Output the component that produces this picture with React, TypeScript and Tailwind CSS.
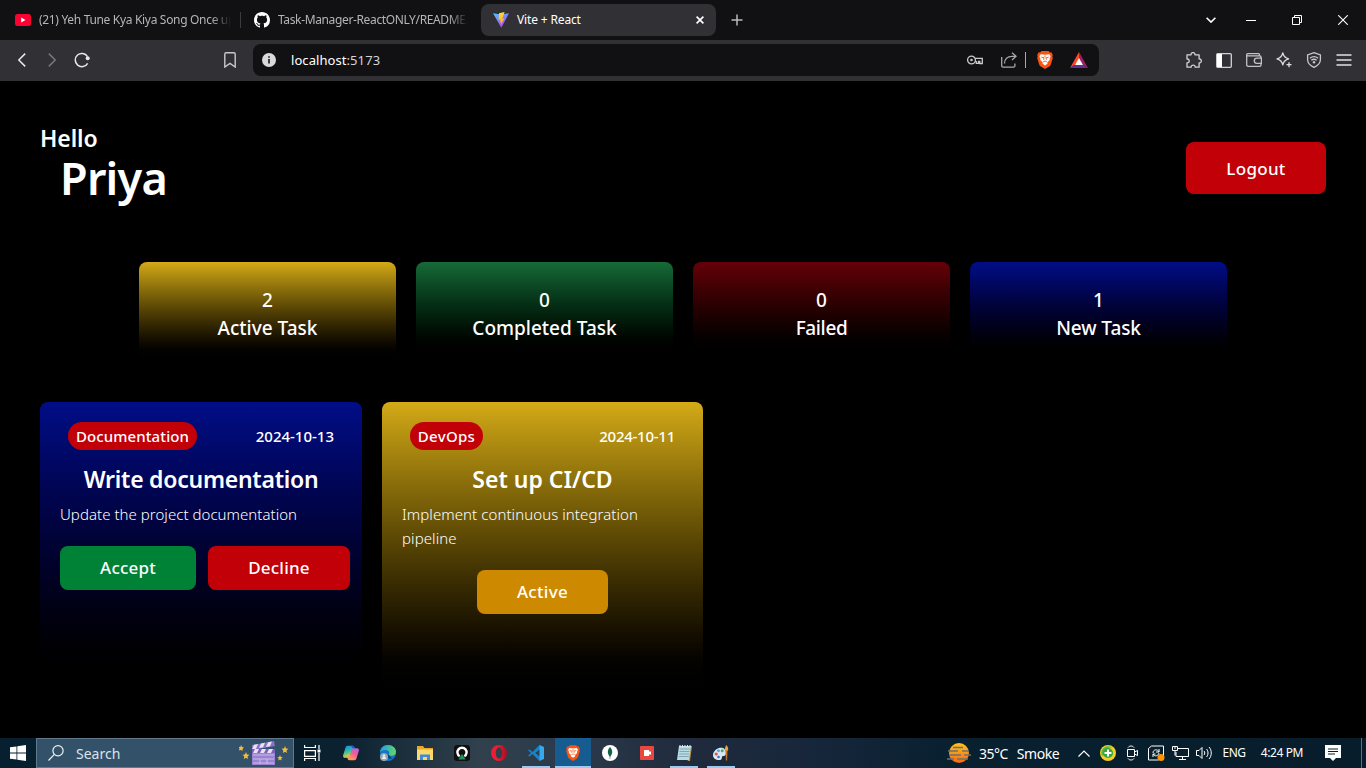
import React from "react";

type IconProps = { className?: string };

const Brave = ({ className = "" }: IconProps) => (
  <svg className={className} viewBox="0 0 16 18">
    <path d="M4.4 0h7.2l1.2 1.5 1.5-.2L15.8 4l-.5 1.3.5 1.6-2 6.5c-.3 1-.8 1.6-1.6 2.1L8 18l-4.2-2.5c-.8-.5-1.3-1.100-1.600-2.100l-2-6.500.5-1.600L.2 4l1.500-2.700 1.500.2z" fill="#fb5412" />
    <path d="M3.700 3.200 8 3.800l4.300-.6 1.300 2-1 2.600.2 1.300-2.500 2.200.3 1.300L8 14.400l-2.600-1.800.3-1.300-2.500-2.200.2-1.300-1-2.600z" fill="#fff" />
    <path d="M4.300 6.200 7 6.800l-.4 2M11.700 6.200 9 6.800l.4 2M6.200 10.800 8 10l1.800.8M8 4.500v2" stroke="#fb5412" strokeWidth=".9" fill="none" />
  </svg>
);

const tab = "font-['Noto_Sans',sans-serif] text-[12px] leading-5 whitespace-nowrap";

function TabStrip() {
  return (
    <div className="flex h-10 shrink-0 items-center bg-[#111113] text-[#b5b5b9]">
      <div className="flex h-8 w-[240px] items-center pl-[15px]">
        <svg className="h-3 w-4 shrink-0" viewBox="0 0 16 12">
          <rect width="16" height="12" rx="2.500" fill="#ff0033" />
          <path d="M6.200 3.500v5l4.300-2.500z" fill="#fff" />
        </svg>
        <span className={`${tab} ml-2 w-[192px] overflow-hidden tracking-[-0.32px] [mask-image:linear-gradient(to_right,black_90%,transparent)]`}>(21) Yeh Tune Kya Kiya Song Once up</span>
      </div>
      <div className="h-4 w-px bg-[#3b3b3f]" />
      <div className="flex h-8 w-[240px] items-center pl-[13px]">
        <svg className="h-4 w-4 shrink-0" viewBox="0 0 16 16" fill="#fff">
          <path d="M8 0C3.580 0 0 3.580 0 8c0 3.540 2.290 6.530 5.470 7.590.4.070.55-.17.55-.38 0-.19-.01-.82-.01-1.490-2.010.37-2.530-.49-2.690-.94-.09-.23-.48-.94-.82-1.130-.28-.15-.68-.52-.01-.53.63-.01 1.080.58 1.230.82.72 1.210 1.870.87 2.330.66.070-.52.280-.87.510-1.070-1.780-.2-3.640-.89-3.640-3.950 0-.87.310-1.590.820-2.150-.080-.2-.360-1.020.080-2.120 0 0 .670-.210 2.200.820.640-.180 1.320-.270 2-.270s1.360.090 2 .270c1.530-1.040 2.200-.820 2.200-.820.440 1.100.160 1.920.080 2.120.510.560.820 1.270.820 2.150 0 3.070-1.870 3.750-3.650 3.950.290.250.540.730.540 1.480 0 1.070-.010 1.930-.010 2.200 0 .210.150.460.550.380A8.010 8.010 0 0 0 16 8c0-4.420-3.580-8-8-8" />
        </svg>
        <span className={`${tab} ml-2 w-[190px] overflow-hidden tracking-[-0.36px] [mask-image:linear-gradient(to_right,black_90%,transparent)]`}>Task-Manager-ReactONLY/README.</span>
      </div>
      <div className="flex h-8 w-[235px] items-center rounded-[8px] bg-[#313135] pr-3 pl-3">
        <svg className="h-4 w-4 shrink-0" viewBox="0 0 16 16">
          <defs>
            <linearGradient id="va" x1="0" y1="0" x2=".7" y2="1">
              <stop offset="0" stopColor="#41d1ff" />
              <stop offset="1" stopColor="#bd34fe" />
            </linearGradient>
            <linearGradient id="vb" x1="0" y1="0" x2="0" y2="1">
              <stop offset="0" stopColor="#ffdd35" />
              <stop offset="1" stopColor="#ffa800" />
            </linearGradient>
          </defs>
          <path d="M0 1.200 8 2.600l8-1.400L8.300 15.700z" fill="url(#va)" />
          <path d="M11.600 0 6 1.200 5.600 8l2-.4-.5 3 1.300-.4-.8 3.200 3.700-7-2.100.3z" fill="url(#vb)" />
        </svg>
        <span className={`${tab} ml-2 flex-1 tracking-[-0.15px] text-white`}>Vite + React</span>
        <svg className="h-2 w-2" viewBox="0 0 8 8" stroke="#fff" strokeWidth="1.700"><path d="m.6.6 6.800 6.800M7.400.6.6 7.400" /></svg>
      </div>
      <svg className="ml-[15px] h-3 w-3" viewBox="0 0 12 12" stroke="#b9b9bc" strokeWidth="1.500"><path d="M6 .5v11M.5 6h11" /></svg>
      <div className="ml-auto flex items-center pr-[18px]">
        <svg className="h-[6px] w-[10px]" viewBox="0 0 10 6" fill="none" stroke="#fff" strokeWidth="1.600"><path d="m.6.7 4.400 4.400L9.400.7" /></svg>
        <div className="ml-[30px] h-px w-[10px] bg-white" />
        <svg className="ml-9 h-[10px] w-[10px]" viewBox="0 0 10 10" fill="none" stroke="#fff"><path d="M.5 2.500h7v7h-7zM2.500 2.500v-2h7v7h-2" /></svg>
        <svg className="ml-9 h-[10px] w-[10px]" viewBox="0 0 10 10" fill="none" stroke="#fff" strokeWidth="1.100"><path d="m.2.2 9.600 9.600M9.800.2.2 9.800" /></svg>
      </div>
    </div>
  );
}

function Toolbar() {
  return (
    <div className="flex h-[41px] shrink-0 items-center bg-[#313135] pb-px">
      <svg className="ml-[18px] h-[14px] w-[8px]" viewBox="0 0 8 14" fill="none" stroke="#e8e8ea" strokeWidth="1.500"><path d="M7.200.6.8 7l6.400 6.400" /></svg>
      <svg className="ml-[22px] h-[14px] w-[8px]" viewBox="0 0 8 14" fill="none" stroke="#77777c" strokeWidth="1.500"><path d="M.8.6 7.200 7 .8 13.400" /></svg>
      <svg className="ml-[18px] h-4 w-4" viewBox="0 0 16 16" fill="none" stroke="#e8e8ea" strokeWidth="1.500"><path d="M13.600 11.300A6.600 6.600 0 1 1 13.500 4.600" /><circle cx="13.700" cy="6.200" r="2" fill="#e8e8ea" stroke="none" /></svg>
      <svg className="ml-[134px] h-4 w-3" viewBox="0 0 12 16" fill="none" stroke="#c9c9cc" strokeWidth="1.400"><path d="M.8 2.200C.8 1.300 1.300.8 2.200.8h7.600c.9 0 1.400.5 1.400 1.400V15L6 11.400.8 15z" /></svg>
      <div className="ml-[17px] flex h-8 w-[846px] items-center rounded-[8px] bg-[#111113]">
        <svg className="ml-[9px] h-[14px] w-[14px]" viewBox="0 0 14 14"><circle cx="7" cy="7" r="7" fill="#d9d9dc" /><path d="M6.200 6h1.600v4.500H6.200zM6.200 3.200h1.600v1.600H6.200z" fill="#111113" /></svg>
        <span className="ml-[15px] flex-1 font-['Noto_Sans',sans-serif] text-[13px] leading-5 tracking-[0.07px] text-[#d4d4d7]"><span className="text-white">localhost</span>:5173</span>
        <svg className="h-4 w-4" viewBox="0 0 16 16" fill="none" stroke="#c9c9cc" strokeWidth="1.300"><circle cx="4.500" cy="8" r="3.900" /><circle cx="4.500" cy="8" r="1.300" fill="#c9c9cc" stroke="none" /><path d="M8.100 6.300h7.200v5.200h-2.500V9.400h-1.300v2H9.300V9.600H8.200" /></svg>
        <svg className="ml-[18px] h-4 w-4" viewBox="0 0 16 16" fill="none" stroke="#a9a9ac" strokeWidth="1.300"><path d="M.7 5v8.800c0 .9.500 1.400 1.400 1.400h10.400c.9 0 1.400-.5 1.400-1.400v-2.300M3.500 11.500C3.500 6.800 6.500 4.300 11 4.300h4M11 .7l4.100 3.600L11 8" /></svg>
        <div className="ml-2 h-4 w-px bg-[#a9a9ac]" />
        <Brave className="ml-[11px] h-[18px] w-4" />
        <svg className="mr-[11px] ml-[17px] h-4 w-[18px]" viewBox="0 0 18 16"><path d="M9 0 0 16l9-6z" fill="#ff4724" /><path d="m9 0 9 16-9-6z" fill="#9e1f63" /><path d="M0 16h18l-4-3H4z" fill="#662d91" /><path d="m9 6 4 7H5z" fill="#fff" /></svg>
      </div>
      <div className="ml-auto flex items-center gap-[14px] pr-[14px]">
        <svg className="h-4 w-4" viewBox="0 0 16 16" fill="none" stroke="#d3d3d6" strokeWidth="1.300" strokeLinejoin="round"><path d="M1 2.800h4.100c-.3-1.500.8-2.200 1.900-2.200s2.200.7 1.900 2.200h4.200V7c1.500-.3 2.200.8 2.200 1.900s-.7 2.200-2.200 1.900v4.400H9.200c.1-1.400-.9-2.100-2-2.100s-2.200.7-2 2.100H1v-4.400c1.600.1 2.200-.9 2.200-1.900S2.500 6.900 1 7z" /></svg>
        <svg className="h-[15px] w-4" viewBox="0 0 16 15"><rect x=".7" y=".7" width="14.600" height="13.600" rx="1" fill="none" stroke="#d3d3d6" strokeWidth="1.300" /><path d="M1 1h5v13H1z" fill="#fff" /></svg>
        <svg className="h-[14px] w-4" viewBox="0 0 16 14" fill="none" stroke="#c3c3c6" strokeWidth="1.300"><path d="M15 5.200V4c0-.7-.4-1.100-1.100-1.100H1.800C1.100 2.900.7 2.400.7 1.800S1.200.7 1.900.7h10.500c.7 0 1.100.4 1.100 1.100v1.100M.7 2v9.900c0 .8.500 1.400 1.400 1.400h11.500c.9 0 1.400-.5 1.400-1.400v-1.400M15.400 5.200h-4.500a2.600 2.600 0 0 0 0 5.200h4.500z" /></svg>
        <svg className="h-4 w-4" viewBox="0 0 16 16" fill="none" stroke="#e0e0e3" strokeWidth="1.300" strokeLinejoin="round"><path d="M6.800.8c.8 3.700 2.100 5.100 5.800 6-3.700.9-5 2.200-5.800 6C6 9 4.700 7.700 1 6.800c3.700-.9 5-2.300 5.800-6zM13 10.200v5M10.500 12.700h5" /></svg>
        <svg className="h-4 w-4" viewBox="0 0 16 16" fill="none" stroke="#c9c9cc" strokeWidth="1.300"><path d="M8 .7 14.400 3v4.500c0 3.600-2.500 6.200-6.400 7.800-3.900-1.600-6.400-4.200-6.400-7.800V3zM3.900 6.300c2.500-2 5.700-2 8.200 0M5.300 8.300c1.700-1.300 3.700-1.300 5.400 0" /><circle cx="8" cy="10.200" r="1.200" fill="#c9c9cc" stroke="none" /></svg>
        <svg className="h-3 w-4" viewBox="0 0 16 12" stroke="#e0e0e3" strokeWidth="1.400"><path d="M.5 1h15M.5 6h15M.5 11h15" /></svg>
      </div>
    </div>
  );
}

const sans = "font-['Noto_Sans',sans-serif]";

function Stat({ n, label, tone, track }: { n: string; label: string; tone: string; track: string }) {
  return (
    <div className={`flex h-[100px] w-[257px] flex-col items-center rounded-[8px] bg-linear-to-b to-black pt-6 text-[19px] leading-7 font-medium ${tone}`}>
      <div>{n}</div>
      <div className={track}>{label}</div>
    </div>
  );
}

function TaskCard(props: { tone: string; tag: string; tagClass: string; date: string; dateClass: string; title: string; titleClass: string; body: string; bodyClass: string; children: React.ReactNode }) {
  return (
    <div className={`h-[300px] rounded-[8px] bg-linear-to-b to-black px-5 pt-5 ${props.tone}`}>
      <div className="flex h-7 items-center justify-between pr-2 pl-2">
        <span className={`flex h-7 items-center justify-center rounded-full bg-[#c10007] text-[15px] font-medium whitespace-nowrap ${props.tagClass}`}>{props.tag}</span>
        <span className={`text-[15px] leading-6 font-medium whitespace-nowrap ${props.dateClass}`}>{props.date}</span>
      </div>
      <h2 className={`mt-[13px] text-center text-[23px] leading-8 font-semibold whitespace-nowrap ${props.titleClass}`}>{props.title}</h2>
      <p className={`mt-[7px] text-[15px] leading-6 font-light ${props.bodyClass}`}>{props.body}</p>
      {props.children}
    </div>
  );
}

const button = "flex items-center justify-center rounded-[8px] text-[17px] font-medium whitespace-nowrap";

function Dashboard() {
  return (
    <main className={`${sans} flex h-[657px] shrink-0 flex-col bg-black px-10 text-white`}>
      <header className="flex items-start justify-between pt-[41px]">
        <div>
          <div className="text-[23px] leading-8 font-semibold tracking-[-0.1px]">Hello</div>
          <div className="pl-5 text-[45px] leading-[48px] font-semibold tracking-[-0.8px]">Priya</div>
        </div>
        <button className={`${button} mt-5 h-[52px] w-[140px] bg-[#c10007] pt-[2px] tracking-[0.3px]`}>Logout</button>
      </header>
      <section className="mt-[60px] flex justify-center gap-5">
        <Stat n="2" label="Active Task" tone="from-[#d4aa17]" track="" />
        <Stat n="0" label="Completed Task" tone="from-[#166b38]" track="" />
        <Stat n="0" label="Failed" tone="from-[#650009]" track="tracking-[-0.35px]" />
        <Stat n="1" label="New Task" tone="from-[#000e87]" track="tracking-[-0.1px]" />
      </section>
      <section className="mt-10 flex gap-5">
        <TaskCard tone="w-[322px] from-[#000e87]" tag="Documentation" tagClass="w-[129px] tracking-[0.1px]" date="2024-10-13" dateClass="" title="Write documentation" titleClass="tracking-[-0.25px]" body="Update the project documentation" bodyClass="tracking-[0.04px]">
          <div className="mt-5 flex gap-3">
            <button className={`${button} h-11 w-[136px] shrink-0 bg-[#008236] tracking-[0.2px]`}>Accept</button>
            <button className={`${button} h-11 w-[142px] shrink-0 bg-[#c10007] tracking-[0.2px]`}>Decline</button>
          </div>
        </TaskCard>
        <TaskCard tone="w-[321px] from-[#d4aa17]" tag="DevOps" tagClass="w-[73px] tracking-[0.3px]" date="2024-10-11" dateClass="tracking-[-0.25px]" title="Set up CI/CD" titleClass="" body="Implement continuous integration pipeline" bodyClass="tracking-[0.08px]">
          <button className={`${button} mx-auto mt-5 h-11 w-[131px] bg-[#cd8900] tracking-[0.3px]`}>Active</button>
        </TaskCard>
      </section>
    </main>
  );
}

const slot = "flex h-full w-[37px] shrink-0 items-center justify-center";
const open = "border-b-2 border-[#9cc9f0] pt-[2px]";

function Taskbar() {
  return (
    <footer className={`${sans} flex h-[30px] shrink-0 items-stretch bg-[linear-gradient(90deg,#06202f_0%,#0b2130_25%,#30404c_35%,#2b3a4b_42%,#202b3d_50%,#16263a_60%,#08202f_70%,#071d2b_100%)] text-white`}>
      <div className="flex w-9 items-center justify-center">
        <svg className="h-4 w-4" viewBox="0 0 16 16" fill="#fff"><path d="M0 2.300 6.500 1.400v6.200H0zM7.300 1.300 16 0v7.600H7.300zM0 8.400h6.500v6.200L0 13.700zM7.300 8.400H16V16l-8.700-1.300z" /></svg>
      </div>
      <div className="flex w-[258px] items-center border border-[#5e7a8c] bg-[#33526a] pl-[11px]">
        <svg className="h-4 w-4" viewBox="0 0 16 16" fill="none" stroke="#eef3f6" strokeWidth="1.200"><circle cx="10" cy="5.800" r="5.100" /><path d="M6.400 9.400.5 15.500" /></svg>
        <span className="ml-3 flex-1 pt-px text-[14px] leading-5 tracking-[0px] text-[#dbe3e8]">Search</span>
        <svg className="mr-1 h-6 w-[50px]" viewBox="0 0 50 24">
          <path d="m13 4 22-4 1 5-23 4z" fill="#8a70c8" />
          <path d="m15 3.800 4-.7-2 4.600-4 .7zM22 2.500l4-.7-2 4.600-4 .7zM29 1.300l4-.7-2 4.600-4 .7z" fill="#eae1f5" />
          <path d="M13 8h23v16H13z" fill="#9a83d2" />
          <path d="M13 8h23v4H13z" fill="#7a60bd" />
          <path d="m16 8h4l-2 4h-4zM23 8h4l-2 4h-4zM30 8h4l-2 4h-4z" fill="#eae1f5" />
          <path d="M14 14h21M14 18h21M14 22h21M21 18v5M28 18v5" stroke="#cbbceb" strokeWidth="1" />
          <path d="m2 4 1 2 2 .5L3.500 8v2L2 9 0 9.600.5 7.500-.5 6l2-.2zM7 11l1 2.500 2.500.3-2 1.700.6 2.500L7 16.700 4.800 18l.5-2.500-1.800-1.700 2.500-.3zM46 5l1 2.500 2.500.3-2 1.700.6 2.500-2.100-1.300-2.200 1.300.5-2.500-1.800-1.700 2.500-.3zM41 14l.8 2 2 .2-1.600 1.400.5 2-1.700-1-1.800 1 .5-2-1.500-1.400 2-.2z" fill="#f6bd3d" />
        </svg>
      </div>
      <div className={slot}>
        <svg className="h-4 w-[17px]" viewBox="0 0 17 16" fill="none" stroke="#fff" strokeWidth="1.200"><path d="M.6 0v2.500h10.800V0M.6 5.600h10.800v5.800H.6zM.6 16v-2.500h10.800V16M15 0v4M15 8v8" /><path d="M13.500 4.500h3v3h-3z" fill="#fff" stroke="none" /></svg>
      </div>
      <div className="-ml-px mr-px flex items-stretch">
        <div className={slot}>
          <svg className="ml-[5px] h-4 w-4" viewBox="0 0 16 16"><defs><linearGradient id="ca" x1="0" y1="0" x2=".3" y2="1"><stop stopColor="#1687e8" /><stop offset=".5" stopColor="#31b8ad" /><stop offset="1" stopColor="#e9d034" /></linearGradient><linearGradient id="cb" x1="1" y1="0" x2=".4" y2="1"><stop stopColor="#a866ef" /><stop offset=".5" stopColor="#f05a9c" /><stop offset="1" stopColor="#ff9d52" /></linearGradient></defs><path d="M4.500.8h5c1.300 0 1.700.8 2 2l.4 1.400H9.500L7.200 11c-.4 1.200-1 1.700-2 1.700H2C.3 12.700-.2 11.400.2 10l2.200-7C2.900 1.500 3.300.8 4.500.8z" fill="url(#ca)" /><path d="M11.500 15.200h-5c-1.300 0-1.700-.8-2-2l-.4-1.400h2.400L8.800 5c.4-1.200 1-1.700 2-1.700H14c1.700 0 2.200 1.300 1.800 2.700l-2.200 7c-.5 1.500-.9 2.200-2.100 2.200z" fill="url(#cb)" /><path d="M8.200.8h1.300c1.300 0 1.700.8 2 2l.3.600H10.500C9 3.300 8.700 1.800 8.200.8z" fill="#2352d8" /></svg>
        </div>
        <div className={slot}>
          <svg className="ml-[5px] h-4 w-4" viewBox="0 0 16 16"><defs><linearGradient id="ea" x1="0" y1=".3" x2="1" y2=".5"><stop stopColor="#249ce6" /><stop offset="1" stopColor="#62d765" /></linearGradient></defs><circle cx="8" cy="8" r="8" fill="#1377c5" /><path d="M0 7C.6 2.800 3.700 0 8 0c4.600 0 8 3.200 8 6.800 0 2.700-2 4-4.500 4-1.800 0-3-.7-2.700-1.300C10.500 6.900 8 5 5.500 5 3 5 1 6 0 7z" fill="url(#ea)" /><path d="M5.500 8c-.8 3 1.800 6 6 5.800 1.600 0 2.800-.7 3.700-1.500l-2 2.700L10 11z" fill="#16416f" /><circle cx="4" cy="12" r="4" fill="#9aa8b2" /><circle cx="4" cy="10.800" r="1.300" fill="#e8edf0" /><path d="M1.800 14a2.200 2.200 0 0 1 4.400 0z" fill="#e8edf0" /></svg>
        </div>
        <div className={slot}>
          <svg className="ml-[5px] h-[14px] w-4" viewBox="0 0 16 14"><path d="M0 0h6l1.500 2H16v3H0z" fill="#e6a928" /><path d="M0 3.500h16V14H0z" fill="#ffd86b" /><path d="M3 14V8.500h10V14h-3v-3H6v3z" fill="#3b8cd9" /></svg>
        </div>
        <div className={slot}>
          <svg className="ml-[5px] h-4 w-4" viewBox="0 0 16 16"><rect width="16" height="16" rx="3" fill="#101010" /><path d="M5.700 11.300A4.600 4.600 0 1 1 10.300 11.300" fill="none" stroke="#fff" strokeWidth="2.400" /><path d="m8 9 3.700 5.500H4.300z" fill="#1e9358" /></svg>
        </div>
        <div className={slot}>
          <svg className="ml-[5px] h-4 w-4" viewBox="0 0 16 16"><defs><linearGradient id="op" x1="0" y1="0" x2="1" y2="0"><stop offset=".4" stopColor="#f01c33" /><stop offset="1" stopColor="#a50f24" /></linearGradient></defs><path fillRule="evenodd" d="M8 0a8 8 0 1 0 0 16A8 8 0 0 0 8 0zm0 2.500c2 0 3.200 2.500 3.200 5.500S10 13.500 8 13.500 4.800 11 4.800 8 6 2.500 8 2.500z" fill="url(#op)" /></svg>
        </div>
        <div className={slot}>
          <div className={`${open} ml-[5px] flex h-full w-7 items-center justify-center`}>
            <svg className="h-4 w-4" viewBox="0 0 16 16"><path d="M11.500 0 4.500 7 1.500 4.500 0 5.300 3 8l-3 2.700 1.500.9 3-2.600 7 7 .5-1V1z" fill="#1683cc" /><path d="m11.500 0 4.500 2v12l-4.500 2zM11.500 4.500 7 8l4.500 3.500z" fill="#36a8ed" /><path d="M11.500 4.500 7 8l4.500 3.500z" fill="#30404c" /></svg>
          </div>
        </div>
      </div>
      <div className={`${open} ml-[2px] flex w-9 items-center justify-center bg-[#175c91]`}><Brave className="h-4 w-[14px]" /></div>
      <div className={slot}>
        <svg className="h-4 w-4" viewBox="0 0 16 16"><circle cx="8" cy="8" r="8" fill="#fff" /><path d="M8 2c3 3.500 2.800 6.700 0 10-2.800-3.300-3-6.500 0-10z" fill="#116149" /><path d="M8 11v3" stroke="#88a095" /></svg>
      </div>
      <div className={slot}>
        <svg className="h-[14px] w-[14px]" viewBox="0 0 14 14"><rect width="14" height="14" rx="1" fill="#e8483f" /><path d="M4 4h5v1.500h2v3H9V10H4z" fill="#fff" /></svg>
      </div>
      <div className={slot}>
        <div className={`${open} flex h-full w-7 items-center justify-center`}>
          <svg className="h-4 w-4" viewBox="0 0 16 16"><path d="M4 1h12l-2 15H12z" fill="#b68e45" /><path d="M3 1h12l-2 14H1z" fill="#b9dce4" /><path d="M4 4h10M3.600 6.500h10M3.200 9h10M2.800 11.500h10" stroke="#719ba7" strokeWidth=".8" /><path d="M4 0v2M6.500 0v2M9 0v2M11.500 0v2M14 0v2" stroke="#eef" /></svg>
        </div>
      </div>
      <div className={slot}>
        <div className={`${open} flex h-full w-7 items-center justify-center`}>
          <svg className="h-4 w-4" viewBox="0 0 16 16"><path d="M6 3c4-1 7 1 7 5 0 3-2 3-3 3-2 0 0 3.500-3 4-4 .3-7-1.500-7-5 0-3 3-6 6-7z" fill="#d7e9f3" /><circle cx="3.200" cy="9" r="1.600" fill="#e94f45" /><circle cx="5.500" cy="5.800" r="1.400" fill="#46a2e8" /><circle cx="9.200" cy="5.800" r="1.500" fill="#44b069" /><circle cx="5.500" cy="12" r="1.300" fill="#426bc3" /><path d="M12.500 5h2l-.4 10.500h-1.200z" fill="#c87424" /><path d="M11.800 5.500c-.6-2 .8-3 1.200-5.500 1.700 1 2.800 3.500 2 5.500z" fill="#efa147" /></svg>
        </div>
      </div>
      <div className="ml-auto flex items-center whitespace-nowrap">
        <svg className="h-5 w-6" viewBox="0 0 24 20"><defs><linearGradient id="sun" x1="0" y1="0" x2="0" y2="1"><stop stopColor="#ffc21c" /><stop offset="1" stopColor="#f36b16" /></linearGradient></defs><circle cx="12" cy="10" r="10" fill="url(#sun)" /><path d="M6 4.500h10M1 8h10M15 8h7M3 12h11M17 12h7M0 16h7M10 16h11" stroke="#6d6f70" strokeWidth="1.300" /></svg>
        <span className="ml-2 pt-px text-[14px] leading-5 tracking-[-0.5px]">35°C</span>
        <span className="ml-[9px] pt-px text-[14px] leading-5 tracking-[-0.4px]">Smoke</span>
        <svg className="ml-[19px] h-[7px] w-3" viewBox="0 0 12 7" fill="none" stroke="#fff" strokeWidth="1.200"><path d="M.5 6.500 6 1l5.500 5.500" /></svg>
        <svg className="ml-[10px] h-4 w-4" viewBox="0 0 16 16"><circle cx="8" cy="8" r="8" fill="#f5cf24" /><path d="M2 11C-1 5 6-2 13 3 9 1 4 4 5 10z" fill="#59b947" /><circle cx="8" cy="8" r="5" fill="#35a642" /><path d="M7 4.500h2V7h2.500v2H9v2.500H7V9H4.500V7H7z" fill="#fff" /></svg>
        <svg className="ml-[11px] h-4 w-[11px]" viewBox="0 0 11 16" fill="none" stroke="#fff"><path d="M.5 4.500h7v7h-7zM7.500 7l3-1.500v5l-3-1.500M1 2.500c1.500-2 4.500-2 6 0M1 13.500c1.500 2 4.500 2 6 0" /></svg>
        <svg className="ml-[10px] h-4 w-[17px]" viewBox="0 0 17 16" fill="none" stroke="#fff"><path d="M.5 3.500V15h10M.5 3.500l3-2.500h12v11M5 8c0-4 5-4 6-1M11 4v3H8M11 8c-.5 3-4.500 4-6 1M5 12V9h2.500" /><circle cx="13" cy="12.500" r="3.500" fill="#ff9500" stroke="none" /></svg>
        <svg className="ml-[7px] h-[14px] w-[17px]" viewBox="0 0 17 14" fill="none" stroke="#fff"><path d="M6 2.500h10.500v8H4V6M7 13.500h7M10.500 10.500v3M.5.500h5v4h-5zM3 4.500v5" /><path d="M2 2h2" /></svg>
        <svg className="ml-[7px] h-[14px] w-[17px]" viewBox="0 0 17 14" fill="none" stroke="#fff"><path d="M.5 4.500h2.500l3-3v11l-3-3H.5zM8 5c1 1 1 3 0 4M10.500 3c2 2 2 6 0 8M13 1c3 3 3 9 0 12" /></svg>
        <span className="ml-[9px] text-[12px] leading-5 tracking-[-0.4px]">ENG</span>
        <span className="ml-[15px] text-[12px] leading-5 tracking-[-0.4px]">4:24 PM</span>
        <svg className="ml-[22px] h-4 w-4" viewBox="0 0 16 16"><path d="M0 0h16v13h-5L8 16l-3-3H0z" fill="#fff" /><path d="M3 4h10M3 6.500h10M3 9h7" stroke="#071d2b" strokeWidth="1.200" /></svg>
        <div className="ml-5 h-[30px] w-px bg-[#60717c]" />
        <div className="w-1" />
      </div>
    </footer>
  );
}

export default function App() {
  return (
    <div className="flex h-[768px] w-[1366px] flex-col overflow-hidden bg-black">
      <TabStrip />
      <Toolbar />
      <Dashboard />
      <Taskbar />
    </div>
  );
}
